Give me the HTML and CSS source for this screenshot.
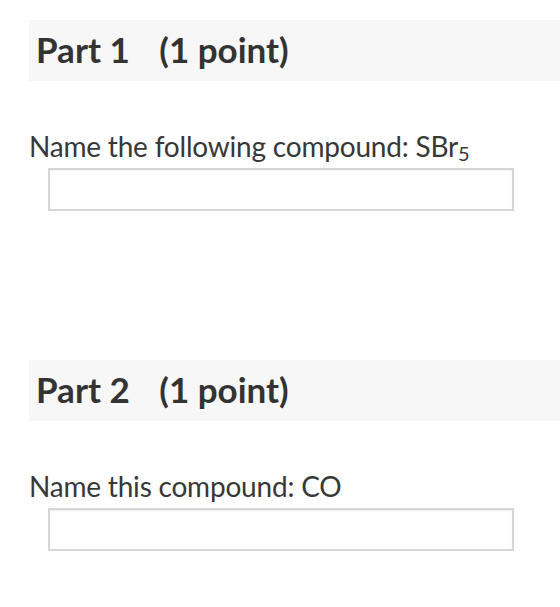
FILE: index.html
```html
<!DOCTYPE html>
<html lang="en">
<head>
    <meta charset="UTF-8">
    <meta name="viewport" content="width=device-width, initial-scale=1.0">
    <title>Naming Compounds</title>
    <link rel="stylesheet" href="styles.css">
</head>
<body>
    <div class="part">
        <h2 class="part-title">Part 1 <span class="points">(1 point)</span></h2>
        <p class="question">Name the following compound: SBr<sub>5</sub></p>
        <input type="text" class="answer">
    </div>

    <div class="part">
        <h2 class="part-title">Part 2 <span class="points">(1 point)</span></h2>
        <p class="question">Name this compound: CO</p>
        <input type="text" class="answer">
    </div>
</body>
</html>
```

FILE: styles.css
```css
body {
    font-family: Lato, "Open Sans", sans-serif;
    margin: 0;
    background: #fff;
    color: #383838;
}

.part {
    padding-top: 20px;
    height: 320px;
}

.part-title {
    margin: 0 0 0 29px;
    height: 61px;
    line-height: 59px;
    padding-left: 7px;
    background: #f7f7f7;
    font-size: 35px;
    font-weight: bold;
    color: #333;
}

.points {
    margin-left: 21px;
}

.question {
    margin: 48px 0 0 29px;
    font-size: 28px;
    line-height: 34px;
    letter-spacing: -0.2px;
}

.question sub {
    font-size: 20px;
    vertical-align: -4px;
    line-height: 0;
}

.answer {
    display: block;
    box-sizing: border-box;
    margin: 5px 0 0 48px;
    width: 466px;
    height: 43px;
    border: 2px solid #d6d6d6;
    box-shadow: inset 0 1px 2px rgba(0, 0, 0, 0.06);
    background: #fff;
    outline: none;
}
```
